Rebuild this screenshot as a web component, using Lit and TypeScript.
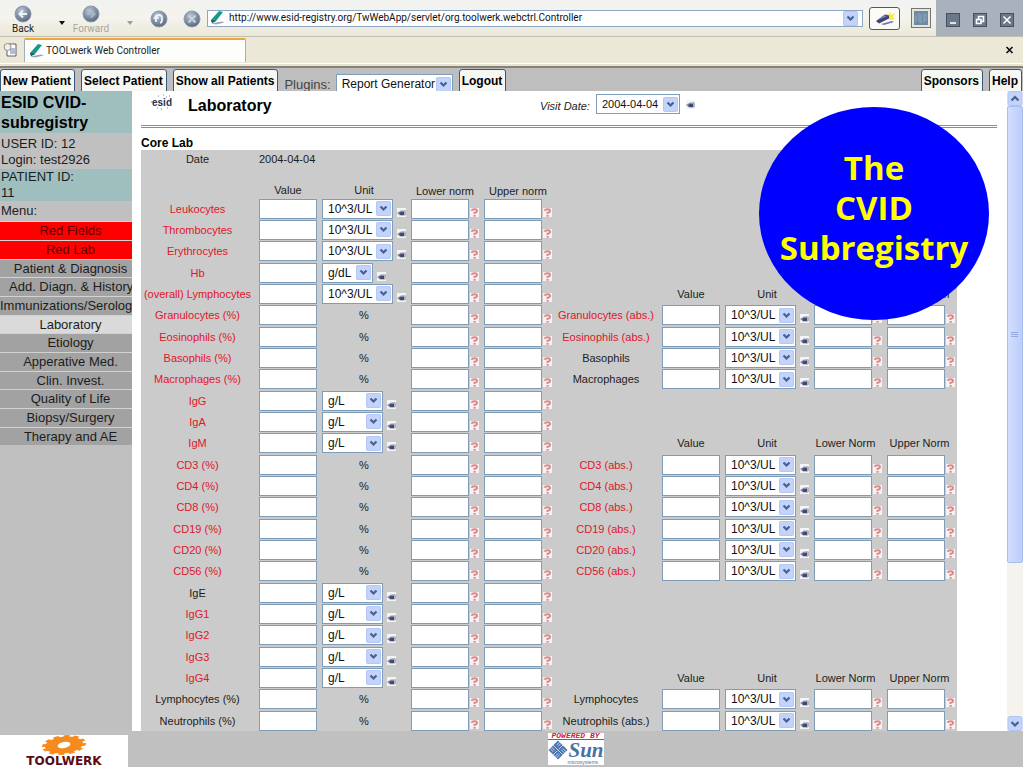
import { LitElement, html, css, svg, nothing } from "lit";
import { customElement } from "lit/decorators.js";
import { classMap } from "lit/directives/class-map.js";

interface Lab {
  name: string;
  red?: boolean;
  unit: string;
}

interface Row {
  left: Lab;
  right?: Lab | "head";
}

const UL = "10^3/UL";
const row = (name: string, unit: string, red = true, right?: Lab | "head"): Row => ({
  left: { name, unit, red },
  right,
});
const abs = (name: string, red = true): Lab => ({ name, unit: UL, red });

const ROWS: Row[] = [
  row("Leukocytes", UL),
  row("Thrombocytes", UL),
  row("Erythrocytes", UL),
  row("Hb", "g/dL"),
  row("(overall) Lymphocytes", UL, true, "head"),
  row("Granulocytes (%)", "%", true, abs("Granulocytes (abs.)")),
  row("Eosinophils (%)", "%", true, abs("Eosinophils (abs.)")),
  row("Basophils (%)", "%", true, abs("Basophils", false)),
  row("Macrophages (%)", "%", true, abs("Macrophages", false)),
  row("IgG", "g/L"),
  row("IgA", "g/L"),
  row("IgM", "g/L", true, "head"),
  row("CD3 (%)", "%", true, abs("CD3 (abs.)")),
  row("CD4 (%)", "%", true, abs("CD4 (abs.)")),
  row("CD8 (%)", "%", true, abs("CD8 (abs.)")),
  row("CD19 (%)", "%", true, abs("CD19 (abs.)")),
  row("CD20 (%)", "%", true, abs("CD20 (abs.)")),
  row("CD56 (%)", "%", true, abs("CD56 (abs.)")),
  row("IgE", "g/L", false),
  row("IgG1", "g/L"),
  row("IgG2", "g/L"),
  row("IgG3", "g/L"),
  row("IgG4", "g/L", true, "head"),
  row("Lymphocytes (%)", "%", false, abs("Lymphocytes", false)),
  row("Neutrophils (%)", "%", false, abs("Neutrophils (abs.)", false)),
];

const MENU = [
  "Red Fields",
  "Red Lab",
  "Patient & Diagnosis",
  "Add. Diagn. & History",
  "Immunizations/Serology",
  "Laboratory",
  "Etiology",
  "Apperative Med.",
  "Clin. Invest.",
  "Quality of Life",
  "Biopsy/Surgery",
  "Therapy and AE",
];

const chevron = html`<svg class="chev" width="15" height="15" viewBox="0 0 15 15" aria-hidden="true">
  <rect width="15" height="15" rx="2" fill="#c3d3fb" />
  <rect x=".5" y=".5" width="14" height="14" rx="1.5" fill="none" stroke="#b4c8f6" />
  <path d="M4.500 5.500 7.500 8.500 10.500 5.500" fill="none" stroke="#46618f" stroke-width="2.2" />
</svg>`;

const hand = html`<svg width="9" height="9" viewBox="0 0 9 9" aria-hidden="true">
  <rect width="9" height="9" fill="#f4f4f6" />
  <path d="M0 5 4 2.500h4v5H3z" fill="#8b93a8" />
  <path d="M2 5 4 4h3v3H3.500z" fill="#3d4a6e" />
  <path d="M7 2.500H9v4.500H7z" fill="#b0b4c4" />
</svg>`;

const question = html`<svg width="9" height="9" viewBox="0 0 9 9" aria-hidden="true">
  <rect width="9" height="9" fill="#f9f1f1" />
  <path d="M1.500 2.800Q2 1.200 4.600 1.200T7 2.900Q7 4.200 4.500 4.600V6" fill="none" stroke="#d98a8a" stroke-width="1.900" />
  <rect x="3.500" y="7" width="2.200" height="1.700" fill="#d98a8a" />
</svg>`;

const pen = html`<svg class="pen" width="15" height="14" viewBox="0 0 15 14" aria-hidden="true">
  <path d="M1 9 9 0l4 1-7 9-4 2z" fill="#159a8a" />
  <path d="M1 9l5 1-4 2z" fill="#2c4a70" />
  <path d="M1 12.5 12 10.5 14.5 11.5 6 13.5z" fill="#9aa3ad" />
</svg>`;

const orb = (inner: unknown) => html`<svg width="18" height="18" viewBox="0 0 18 18" aria-hidden="true">
  <defs>
    <radialGradient id="g" cx=".4" cy=".3" r=".8">
      <stop offset="0" stop-color="#b9c6d6" />
      <stop offset=".6" stop-color="#77879c" />
      <stop offset="1" stop-color="#4c5a6e" />
    </radialGradient>
  </defs>
  <circle cx="9" cy="9" r="8" fill="url(#g)" stroke="#8e9aab" />
  ${inner}
</svg>`;

const gearTeeth = Array.from({ length: 12 }, (_, i) => i * 30 + 10);

@customElement("app-root")
export class AppRoot extends LitElement {
  static styles = css`
    :host {
      display: flex;
      flex-direction: column;
      height: 100vh;
      overflow: hidden;
      background: #c0c0c0;
      color: #1c1c1c;
      font: 11px/14px "Liberation Sans", Arial, sans-serif;
    }
    * {
      box-sizing: border-box;
    }
    svg {
      display: block;
      flex: none;
    }
    button {
      margin: 0;
      padding: 0;
      border: 0;
      background: none;
      color: inherit;
      font: inherit;
    }
    a {
      color: inherit;
      text-decoration: none;
    }

    .toolbar {
      display: flex;
      align-items: center;
      flex: none;
      height: 37px;
      padding-left: 4px;
      border-bottom: 1px solid #c2c0b4;
      background: linear-gradient(#f1f2f0, #f4f3ec 50%, #ebe8d8);
      font: 10px/12px Roboto, sans-serif;
    }
    .nav {
      display: flex;
      flex-direction: column;
      align-items: center;
      width: 38px;
      padding-top: 4px;
    }
    .off {
      color: #a8a69c;
    }
    .drop {
      width: 10px;
      margin: 10px 5px 0 15px;
    }
    .round {
      margin: 2px 5px 0 10px;
    }
    .address {
      display: flex;
      align-items: center;
      flex: 1;
      height: 17px;
      margin: 0 6px 0 1px;
      padding: 0 2px;
      border: 1px solid #8ea6c4;
      background: #fff;
    }
    .url {
      flex: 1;
      min-width: 0;
      margin-left: 4px;
      padding: 0;
      border: 0;
      outline: 0;
      background: none;
      color: #111;
      font: inherit;
    }
    .go {
      display: grid;
      place-items: center;
      width: 31px;
      height: 23px;
      border: 1px solid #3f5c80;
      border-radius: 3px;
      background: #fbfaf4;
    }
    .throb {
      display: grid;
      place-items: center;
      width: 20px;
      height: 20px;
      margin: 0 5px 0 11px;
      border: 1px solid #71767c;
      background: #e8e6da;
    }
    .win {
      display: flex;
      align-items: center;
      justify-content: center;
      gap: 13px;
      align-self: stretch;
      width: 87px;
      padding-top: 4px;
      background: #a9b1bd;
    }
    .tabs {
      display: flex;
      align-items: center;
      flex: none;
      height: 31px;
      padding: 0 9px 4px 3px;
      border-bottom: 2px solid #85827a;
      background: linear-gradient(#ebe8d8 26px, #fff 26px, #fff 27px, #e8e4d0 27px);
      font: 10px/12px Roboto, sans-serif;
    }
    .tab {
      display: flex;
      align-items: center;
      align-self: flex-end;
      gap: 2px;
      width: 222px;
      height: 24px;
      margin-left: 6px;
      padding: 0 4px 1px;
      border: 1px solid #a3adc0;
      border-top: 2px solid #f0a43a;
      border-bottom: 0;
      border-radius: 2px 2px 0 0;
      background: #fdfdfb;
    }
    .close {
      margin-left: auto;
      color: #111;
    }

    .bar {
      display: flex;
      align-items: flex-start;
      flex: none;
      gap: 6px;
      height: 23px;
      padding: 1px 1px 0 0;
      overflow: hidden;
      background: #bebebe;
    }
    .btn {
      height: 28px;
      padding: 0 3px 4px 2px;
      border: 1px solid #3a5775;
      border-radius: 3px;
      background: #f6f6f3;
      color: #000;
      font: bold 12px/16px "Liberation Sans", Arial, sans-serif;
      white-space: nowrap;
    }
    .plugins {
      display: flex;
      align-items: flex-start;
      gap: 5px;
      color: #444;
      font-size: 13px;
    }
    .plugins label {
      padding-top: 8px;
      line-height: 16px;
    }
    .plugins .pick {
      width: 117px;
      margin-top: 5px;
    }
    .right {
      margin-left: auto;
    }

    .body {
      display: flex;
      flex: 1;
      min-height: 0;
    }
    .side {
      flex: none;
      width: 132px;
      overflow: hidden;
      font-size: 13px;
      line-height: 16px;
    }
    .title {
      margin: 0;
      padding: 2px 1px 0;
      height: 42px;
      background: #9fbfbf;
      color: #000;
      font-size: 16px;
      line-height: 20px;
    }
    .info {
      padding: 3px 1px 1px;
    }
    .teal {
      padding: 0 1px;
      background: #9fbfbf;
    }
    .menu {
      padding: 2px 1px;
    }
    .items {
      margin: 0;
      padding: 0;
      list-style: none;
    }
    .item {
      height: 19px;
      border-top: 1px solid #d2d2d2;
      background: #a2a2a2;
      text-align: center;
    }
    .item:nth-child(3n) {
      height: 18px;
    }
    .item a {
      display: block;
      padding-left: 9px;
      line-height: 17px;
      white-space: nowrap;
    }
    .item.wide a {
      padding-left: 0;
    }
    .item.red {
      background: #f00;
      color: #5c0000;
    }
    .item.on {
      background: #dadada;
    }

    .main {
      position: relative;
      flex: 1;
      min-width: 0;
      padding: 0 10px 0 9px;
      overflow: hidden;
      background: #fff;
    }
    .head {
      display: flex;
      align-items: flex-start;
      height: 34px;
      padding: 3px 0 0 10px;
    }
    .name {
      flex: none;
      width: 352px;
      margin: 0 0 0 15px;
      color: #000;
      font-size: 16px;
      line-height: 23px;
    }
    .visit {
      display: flex;
      align-items: flex-start;
      gap: 6px;
    }
    .visit label {
      padding-top: 5px;
      font-style: italic;
    }
    .visit .pick {
      width: 84px;
      font-size: 11px;
    }
    .visit .mini {
      margin-top: 6px;
    }
    .rule {
      height: 3px;
      margin: 0;
      border: 1px solid #8c8c8c;
      border-width: 1px 0;
    }
    .core {
      margin: 0;
      padding-top: 8px;
      color: #000;
      font-size: 12px;
      line-height: 14px;
    }
    .lab {
      width: 816px;
      border-collapse: collapse;
      table-layout: fixed;
      background: #cbcbcb;
    }
    .lab td,
    .lab th {
      padding: 0;
      font-weight: normal;
      text-align: center;
      vertical-align: middle;
      white-space: nowrap;
      line-height: 14px;
    }
    .date {
      height: 17px;
    }
    .lab .day {
      padding-left: 5px;
      text-align: left;
    }
    .cols {
      height: 31px;
    }
    .lab .cols th {
      padding-bottom: 1px;
      vertical-align: bottom;
    }
    .r {
      height: 21px;
    }
    .r:nth-child(3n) {
      height: 22px;
    }
    .lab .pad,
    .lab .cols .pad {
      padding-left: 5px;
    }
    .lab th.pad {
      padding: 0;
    }
    .lab .abs {
      padding-left: 3px;
    }
    .need {
      color: #e0152a;
    }
    .cell {
      display: flex;
      align-items: flex-end;
      gap: 1px;
      height: 20px;
    }
    .cell.u {
      gap: 4px;
    }
    .num {
      width: 58px;
      height: 20px;
      padding: 0 3px;
      border: 1px solid #7f9db9;
      outline: 0;
      background: #fff;
      font: inherit;
    }
    .mini {
      margin-bottom: 2px;
    }
    .pick {
      display: grid;
      align-items: center;
      width: 71px;
      font-size: 12px;
    }
    .pick.gl {
      width: 61px;
    }
    .pick.gdl {
      width: 51px;
    }
    .pick select {
      grid-area: 1 / 1;
      width: 100%;
      height: 20px;
      margin: 0;
      padding: 0 0 0 5px;
      border: 1px solid #7f9db9;
      border-radius: 0;
      outline: 0;
      appearance: none;
      background: #fff;
      color: #111;
      font: inherit;
    }
    .chev {
      grid-area: 1 / 1;
      justify-self: end;
      margin-right: 2px;
      pointer-events: none;
    }
    .badge {
      position: absolute;
      top: 16px;
      right: 18px;
      display: grid;
      place-content: center;
      width: 230px;
      height: 213px;
      padding-bottom: 12px;
      border-radius: 50%;
      background: #00f;
      color: #ff0;
      font: bold 33px/40px "Comic Sans MS", "Open Sans", sans-serif;
      text-align: center;
    }
    .scroll {
      display: flex;
      flex-direction: column;
      flex: none;
      width: 16px;
      background: #f4f3ee;
    }
    .thumb {
      display: grid;
      flex: 458;
      place-items: center;
      border: 1px solid #a9bdee;
      border-radius: 2px;
      background: linear-gradient(90deg, #d3defd, #bccdfa);
    }
    .track {
      flex: 154;
    }
    .foot {
      display: flex;
      align-items: flex-start;
      flex: none;
      height: 36px;
      padding-top: 2px;
    }
    .tw {
      display: flex;
      flex-direction: column;
      align-items: center;
      width: 128px;
      height: 32px;
      margin-top: 2px;
      background: #fff;
      color: #5c0a14;
      font: bold 12px/12px "DejaVu Sans", sans-serif;
    }
    .sun {
      width: 56px;
      height: 32px;
      margin: 0 auto;
      overflow: hidden;
      background: #fff;
      color: #4a70a4;
    }
    .pow {
      border-bottom: 1px solid #e03040;
      color: #d8203a;
      font: italic bold 8px/6px "Liberation Mono", monospace;
      text-align: center;
    }
    .sunrow {
      display: flex;
      align-items: center;
      gap: 1px;
      font: italic bold 21px/20px "Liberation Serif", serif;
    }
    .micro {
      padding-left: 20px;
      font-size: 5px;
      line-height: 4px;
    }
  `;

  private pick(unit: string, label: string, id = "") {
    const size = { pick: true, gl: unit === "g/L", gdl: unit === "g/dL" };
    return html`<span class=${classMap(size)}>
      <select id=${id || nothing} aria-label=${label}><option>${unit}</option></select>${chevron}
    </span>`;
  }

  private half(lab: Lab, id: string, absolute: boolean) {
    const norm = (kind: string) => html`<td class="pad">
      <div class="cell">
        <input class="num" aria-label="${lab.name} ${kind}" />
        <button class="mini" aria-label="Help on ${kind}">${question}</button>
      </div>
    </td>`;
    return html`
      <td class=${classMap({ need: !!lab.red, abs: absolute })}><label for=${id}>${lab.name}</label></td>
      <td class="pad"><div class="cell"><input class="num" id=${id} /></div></td>
      <td>
        ${lab.unit === "%"
          ? "%"
          : html`<div class="cell u">
              ${this.pick(lab.unit, `${lab.name} unit`)}
              <button class="mini" aria-label="Choose unit">${hand}</button>
            </div>`}
      </td>
      ${norm("lower norm")}${norm("upper norm")}
    `;
  }

  private right(r: Row, i: number) {
    if (!r.right) return html`<td colspan="5"></td>`;
    if (r.right === "head")
      return html`<td></td>
        <th>Value</th>
        <th>Unit</th>
        <th>Lower Norm</th>
        <th>Upper Norm</th>`;
    return this.half(r.right, `b${i}`, true);
  }

  private arrow(down: boolean) {
    return html`<svg width="16" height="15" viewBox="0 0 16 15" aria-hidden="true">
      <rect x="1" y=".5" width="14" height="14" rx="2" fill="#c3d3fb" stroke="#b0c4f4" />
      <path d=${down ? "M4.5 6 8 9.5 11.5 6" : "M4.5 9.5 8 6 11.5 9.5"} fill="none" stroke="#46618f" stroke-width="2.2" />
    </svg>`;
  }

  private winButton(label: string, d: string) {
    return html`<button aria-label=${label}>
      <svg width="14" height="14" viewBox="0 0 14 14" aria-hidden="true">
        <rect x=".5" y=".5" width="13" height="13" fill="#6b7889" stroke="#45505f" />
        <path d=${d} fill="none" stroke="#fff" stroke-width="1.6" />
      </svg>
    </button>`;
  }

  private browser() {
    const tri = (c: string) => html`<svg width="10" height="5" viewBox="0 0 10 5" aria-hidden="true">
      <path d="M2 0h6L5 4z" fill=${c} />
    </svg>`;
    return html`
      <div class="toolbar">
        <button class="nav">
          ${orb(svg`<path d="M13 9H6M9 5.5 5.5 9 9 12.5" fill="none" stroke="#eef3f8" stroke-width="2"/>`)}Back
        </button>
        <button class="drop" aria-label="Back history">${tri("#111")}</button>
        <button class="nav off">
          ${orb(svg`<path d="M5 9h7M9 5.5 12.500 9 9 12.500" fill="none" stroke="#aab6c6" stroke-width="2"/>`)}Forward
        </button>
        <button class="drop" aria-label="Forward history">${tri("#a09e94")}</button>
        <button class="round" aria-label="Reload">
          ${orb(svg`<path d="M6 12V8a3 3 0 0 1 6 0v2a3 3 0 0 1-2 3M4 9l2-3 2.500 2.500" fill="none" stroke="#eef3f8" stroke-width="1.800"/>`)}
        </button>
        <button class="round" aria-label="Stop">
          ${orb(svg`<path d="M5.500 5.500l7 7M12.500 5.500l-7 7" fill="none" stroke="#c6d0dc" stroke-width="2.200"/>`)}
        </button>
        <div class="address">
          ${pen}
          <input
            class="url"
            aria-label="Address"
            .value=${"http://www.esid-registry.org/TwWebApp/servlet/org.toolwerk.webctrl.Controller"}
          />
          ${chevron}
        </div>
        <button class="go" aria-label="Search">
          <svg width="22" height="16" viewBox="0 0 22 16" aria-hidden="true">
            <path d="M12 3l3 2 1-4 1 4 4-2-2 4 2 2-6 1z" fill="#f4ea4a" />
            <path d="M2 11 11 4.500 15 5.500 15 8.500 5 13.500z" fill="#3c4478" />
            <path d="M3 10.500 11 5.500 13 6z" fill="#8d96c8" />
            <path d="M7 14 18 11 20 12 10 15z" fill="#6a74b4" />
          </svg>
        </button>
        <div class="throb">
          <svg width="14" height="14" viewBox="0 0 14 14" aria-hidden="true">
            <rect width="14" height="14" fill="#6f8aa3" />
            <path d="M2 4v7M5 2v8l2 2V3M10 2v9l2-3V3" fill="none" stroke="#8fa8be" />
          </svg>
        </div>
        <div class="win">
          ${this.winButton("Minimize", "M4 10h6")}
          ${this.winButton("Restore", "M5.500 6V3.500h5v5H8M3.500 6.500h4.500v4h-4.500z")}
          ${this.winButton("Close", "M3.500 3.500l7 7M10.500 3.500l-7 7")}
        </div>
      </div>
      <div class="tabs">
        <svg width="15" height="16" viewBox="0 0 15 16" aria-hidden="true">
          <path d="M5 2h8v12H4V8" fill="#fff" stroke="#55606e" />
          <path d="M7 7h5M7 9h5M7 11h5" stroke="#6878a0" />
          <circle cx="4.500" cy="5" r="3.500" fill="#f5f1d0" stroke="#8b949e" />
        </svg>
        <div class="tab">${pen}<span>TOOLwerk Web Controller</span></div>
        <button class="close" aria-label="Close tab">
          <svg width="9" height="8" viewBox="0 0 9 8" aria-hidden="true">
            <path d="M1.500 1l6 6M7.500 1l-6 6" stroke="#111" stroke-width="1.700" />
          </svg>
        </button>
      </div>
    `;
  }

  render() {
    return html`
      ${this.browser()}
      <div class="bar">
        <button class="btn">New Patient</button>
        <button class="btn">Select Patient</button>
        <button class="btn">Show all Patients</button>
        <div class="plugins">
          <label for="plugins">Plugins:</label>${this.pick("Report Generator", "Plugins", "plugins")}
        </div>
        <button class="btn">Logout</button>
        <button class="btn right">Sponsors</button>
        <button class="btn">Help</button>
      </div>
      <div class="body">
        <nav class="side">
          <h2 class="title">ESID CVID-<br />subregistry</h2>
          <div class="info">USER ID: 12<br />Login: test2926</div>
          <div class="teal">PATIENT ID:<br />11</div>
          <div class="menu">Menu:</div>
          <ul class="items">
            ${MENU.map(
              (m, i) => html`<li class=${classMap({ item: true, red: i < 2, on: m === "Laboratory", wide: i === 4 })}>
                <a href="#">${m}</a>
              </li>`
            )}
          </ul>
        </nav>
        <main class="main">
          <div class="head">
            <svg width="22" height="16" viewBox="0 0 22 16" aria-label="esid" role="img">
              <text x="1" y="12" font-family="Liberation Sans" font-size="10" font-weight="bold" fill="#2b2f4a">esid</text>
              <path d="M7 2h1M12 1h1M15 3h1M18 2h1M6 14h1M10 15h1M16 14h1M19 11h2M0 8h2" stroke="#7a7fae" />
            </svg>
            <h1 class="name">Laboratory</h1>
            <div class="visit">
              <label for="visit">Visit Date:</label>${this.pick("2004-04-04", "Visit Date", "visit")}
              <button class="mini" aria-label="Choose date">${hand}</button>
            </div>
          </div>
          <hr class="rule" />
          <h3 class="core">Core Lab</h3>
          <table class="lab">
            <colgroup>
              ${[113, 68, 84, 73, 73, 105, 68, 84, 73, 75].map((w) => html`<col width=${w} />`)}
            </colgroup>
            <thead>
              <tr class="date">
                <td>Date</td>
                <td class="day" colspan="9">2004-04-04</td>
              </tr>
              <tr class="cols">
                <td></td>
                <th>Value</th>
                <th>Unit</th>
                <th class="pad">Lower norm</th>
                <th class="pad">Upper norm</th>
                <td colspan="5"></td>
              </tr>
            </thead>
            <tbody>
              ${ROWS.map((r, i) => html`<tr class="r">${this.half(r.left, `a${i}`, false)}${this.right(r, i)}</tr>`)}
            </tbody>
          </table>
          <div class="badge"><span>The</span><span>CVID</span><span>Subregistry</span></div>
        </main>
        <div class="scroll">
          <button aria-label="Scroll up">${this.arrow(false)}</button>
          <div class="thumb">
            <svg width="8" height="8" viewBox="0 0 8 8" aria-hidden="true">
              <path d="M0 1.500h7M0 3.500h7M0 5.500h7" stroke="#93abe6" />
            </svg>
          </div>
          <div class="track"></div>
          <button aria-label="Scroll down">${this.arrow(true)}</button>
        </div>
      </div>
      <footer class="foot">
        <div class="tw">
          <svg width="46" height="20" viewBox="-23 -10 46 20" aria-hidden="true">
            <g transform="rotate(-6) scale(1 .44)" fill="#f58a1f">
              <circle r="19" />
              ${gearTeeth.map((a) => svg`<rect x="-3" y="-22" width="6" height="8" transform="rotate(${a})" />`)}
            </g>
            <ellipse rx="6.500" ry="3" fill="#fff" transform="rotate(-10)" />
          </svg>
          TOOLWERK
        </div>
        <div class="sun">
          <div class="pow">POWERED BY</div>
          <div class="sunrow">
            <svg width="20" height="20" viewBox="0 0 20 20" aria-hidden="true">
              <path d="M10 .5 19.500 10 10 19.500 .5 10z" fill="#4a74b0" />
              <g transform="rotate(45 10 10)" fill="none" stroke="#dfe8f4" stroke-width=".800">
                <path d="M5.500 3v4.500M7.500 3v4.500M10 3v6M3 10h14M10 11v6" />
                <path d="M12 5.500h5M12 7.500h5M3 12.500h5M3 14.500h5M12.500 12v5M14.500 12v5" />
              </g>
            </svg>
            <span>Sun</span>
          </div>
          <div class="micro">microsystems</div>
        </div>
      </footer>
    `;
  }
}
